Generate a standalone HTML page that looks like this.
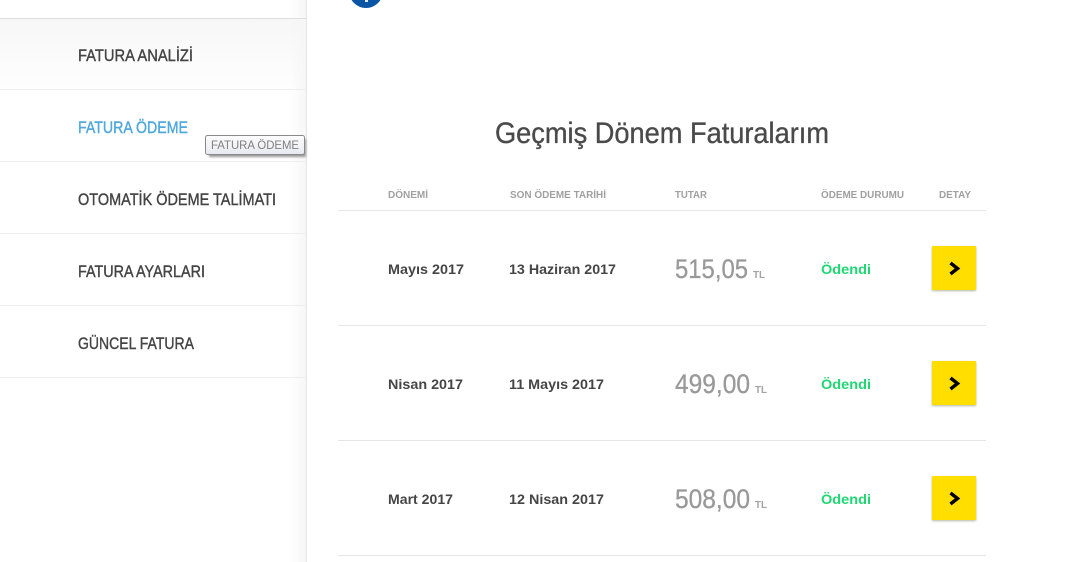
<!DOCTYPE html>
<html lang="tr">
<head>
<meta charset="utf-8">
<title>Geçmiş Dönem Faturalarım</title>
<style>
html,body{margin:0;padding:0;background:#fff;width:1072px;height:562px;overflow:hidden}
svg{display:block}
text{font-family:"Liberation Sans",sans-serif}
.nav{font-size:17px;fill:#444;stroke:#444;stroke-width:.4}
.th{font-size:10.5px;font-weight:bold;fill:#a0a0a0}
.td{font-size:13.5px;font-weight:bold;fill:#454545}
.pr{font-size:27px;fill:#999;stroke:#999;stroke-width:.3}
.tl{font-size:10.5px;font-weight:bold;fill:#a3a3a3}
.ok{font-size:13.5px;font-weight:bold;fill:#1fd873}
</style>
</head>
<body>
<svg width="1072" height="562" viewBox="0 0 1072 562" xmlns="http://www.w3.org/2000/svg">
<defs>
<linearGradient id="g1" x1="0" y1="0" x2="0" y2="1"><stop offset="0" stop-color="#f7f7f7"/><stop offset="1" stop-color="#fefefe"/></linearGradient>
<linearGradient id="g2" x1="0" y1="0" x2="1" y2="0"><stop offset="0" stop-color="#f6f6f6" stop-opacity="0"/><stop offset="1" stop-color="#f6f6f6"/></linearGradient>
<linearGradient id="g3" x1="0" y1="0" x2="0" y2="1"><stop offset="0" stop-color="#fdfdff"/><stop offset="1" stop-color="#e8e8f0"/></linearGradient>
<filter id="b" x="-20%" y="-40%" width="140%" height="200%"><feGaussianBlur stdDeviation="1"/></filter>
</defs>

<!-- sidebar -->
<rect x="0" y="19" width="306" height="70" fill="url(#g1)"/>
<rect x="290" y="0" width="16" height="562" fill="url(#g2)"/>
<rect x="306" y="0" width="1" height="562" fill="#e6e6e6"/>
<g fill="#eeeeee">
<rect x="0" y="18" width="306" height="1" fill="#dedede"/>
<rect x="0" y="89" width="306" height="1"/>
<rect x="0" y="161" width="306" height="1"/>
<rect x="0" y="233" width="306" height="1"/>
<rect x="0" y="305" width="306" height="1"/>
<rect x="0" y="377" width="306" height="1"/>
</g>
<text class="nav" x="78" y="61" textLength="115" lengthAdjust="spacingAndGlyphs">FATURA ANALİZİ</text>
<text class="nav" x="78" y="133" textLength="110" lengthAdjust="spacingAndGlyphs" style="fill:#4ea8dc;stroke:#4ea8dc">FATURA ÖDEME</text>
<text class="nav" x="78" y="205" textLength="198" lengthAdjust="spacingAndGlyphs">OTOMATİK ÖDEME TALİMATI</text>
<text class="nav" x="78" y="277" textLength="127" lengthAdjust="spacingAndGlyphs">FATURA AYARLARI</text>
<text class="nav" x="78" y="349" textLength="116" lengthAdjust="spacingAndGlyphs">GÜNCEL FATURA</text>

<!-- tooltip -->
<rect x="209" y="139" width="97" height="18" fill="#999" filter="url(#b)"/>
<rect x="205.5" y="135.5" width="99" height="19" rx="2" fill="url(#g3)" stroke="#8a8a8a"/>
<text x="211" y="149" font-size="12" fill="#808080" textLength="88" lengthAdjust="spacingAndGlyphs">FATURA ÖDEME</text>

<!-- info circle -->
<circle cx="366" cy="-9" r="17" fill="#0a55a5"/>
<rect x="365" y="0" width="3" height="2" fill="#dfe9f4"/>

<!-- heading -->
<text x="495" y="143" font-size="30" fill="#4a4a4a" stroke="#4a4a4a" stroke-width=".35" textLength="334" lengthAdjust="spacingAndGlyphs">Geçmiş Dönem Faturalarım</text>

<!-- table header -->
<text class="th" x="388" y="198" textLength="40" lengthAdjust="spacingAndGlyphs">DÖNEMİ</text>
<text class="th" x="510" y="198" textLength="96" lengthAdjust="spacingAndGlyphs">SON ÖDEME TARİHİ</text>
<text class="th" x="675" y="198" textLength="32" lengthAdjust="spacingAndGlyphs">TUTAR</text>
<text class="th" x="821" y="198" textLength="83" lengthAdjust="spacingAndGlyphs">ÖDEME DURUMU</text>
<text class="th" x="939" y="198" textLength="32" lengthAdjust="spacingAndGlyphs">DETAY</text>

<g fill="#e6e6e6">
<rect x="338" y="210" width="648" height="1"/>
<rect x="338" y="325" width="648" height="1"/>
<rect x="338" y="440" width="648" height="1"/>
<rect x="338" y="555" width="648" height="1"/>
</g>

<!-- row 1 -->
<text class="td" x="388" y="274" textLength="76" lengthAdjust="spacingAndGlyphs">Mayıs 2017</text>
<text class="td" x="509" y="274" textLength="107" lengthAdjust="spacingAndGlyphs">13 Haziran 2017</text>
<text class="pr" x="675" y="278" textLength="73" lengthAdjust="spacingAndGlyphs">515,05</text>
<text class="tl" x="753" y="278" textLength="12" lengthAdjust="spacingAndGlyphs">TL</text>
<text class="ok" x="821" y="274" textLength="50" lengthAdjust="spacingAndGlyphs">Ödendi</text>
<rect x="932" y="247" width="44" height="44" fill="#b5b5a0" filter="url(#b)"/>
<rect x="932" y="246" width="44" height="44" fill="#ffde00"/>
<path d="M950.5 263l7 5.5-7 5.5" fill="none" stroke="#000" stroke-width="3.4"/>

<!-- row 2 -->
<text class="td" x="388" y="389" textLength="75" lengthAdjust="spacingAndGlyphs">Nisan 2017</text>
<text class="td" x="509" y="389" textLength="95" lengthAdjust="spacingAndGlyphs">11 Mayıs 2017</text>
<text class="pr" x="675" y="393" textLength="75" lengthAdjust="spacingAndGlyphs">499,00</text>
<text class="tl" x="755" y="393" textLength="12" lengthAdjust="spacingAndGlyphs">TL</text>
<text class="ok" x="821" y="389" textLength="50" lengthAdjust="spacingAndGlyphs">Ödendi</text>
<rect x="932" y="362" width="44" height="44" fill="#b5b5a0" filter="url(#b)"/>
<rect x="932" y="361" width="44" height="44" fill="#ffde00"/>
<path d="M950.5 378l7 5.5-7 5.5" fill="none" stroke="#000" stroke-width="3.4"/>

<!-- row 3 -->
<text class="td" x="388" y="504" textLength="65" lengthAdjust="spacingAndGlyphs">Mart 2017</text>
<text class="td" x="509" y="504" textLength="95" lengthAdjust="spacingAndGlyphs">12 Nisan 2017</text>
<text class="pr" x="675" y="508" textLength="75" lengthAdjust="spacingAndGlyphs">508,00</text>
<text class="tl" x="755" y="508" textLength="12" lengthAdjust="spacingAndGlyphs">TL</text>
<text class="ok" x="821" y="504" textLength="50" lengthAdjust="spacingAndGlyphs">Ödendi</text>
<rect x="932" y="477" width="44" height="44" fill="#b5b5a0" filter="url(#b)"/>
<rect x="932" y="476" width="44" height="44" fill="#ffde00"/>
<path d="M950.5 493l7 5.5-7 5.5" fill="none" stroke="#000" stroke-width="3.4"/>
</svg>
</body>
</html>
